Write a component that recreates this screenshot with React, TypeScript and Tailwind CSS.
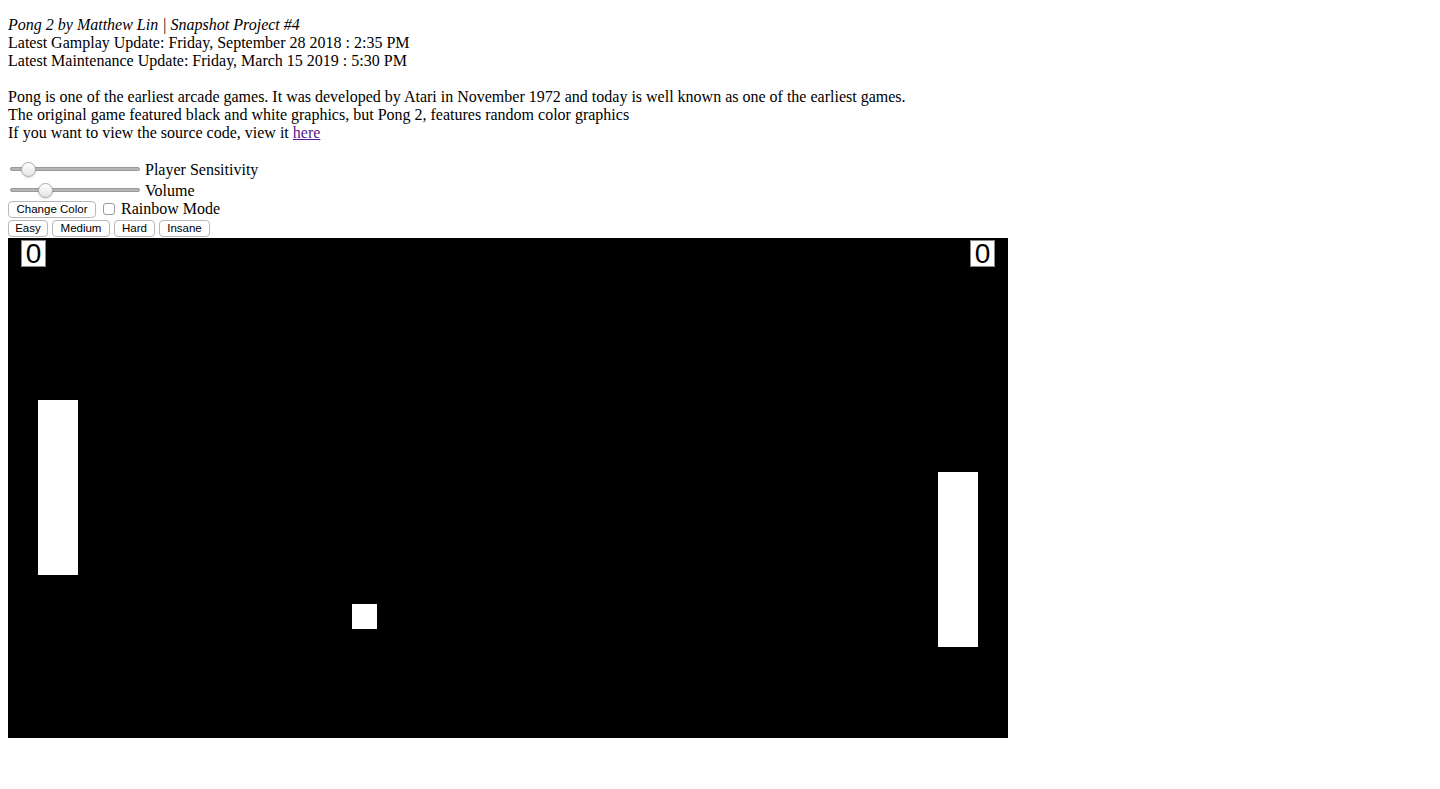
const serif = { fontFamily: '"Liberation Serif", "Times New Roman", serif' };

function Slider({ thumb }: { thumb: number }) {
  return (
    <div className="relative h-[20px] w-[136px] shrink-0">
      <div className="absolute left-[2px] right-[4px] top-[8px] h-[4px] rounded-full bg-[#b5b5b5] border border-[#9a9a9a]" />
      <div
        className="absolute top-[3px] h-[15px] w-[15px] rounded-full bg-gradient-to-b from-white to-[#e4e4e4] border border-[#a8a8a8] shadow-sm"
        style={{ left: thumb }}
      />
    </div>
  );
}

function Btn({ label, w }: { label: string; w: string }) {
  return (
    <button
      className={`${w} h-[17px] rounded-[4px] border border-[#b8b8b8] bg-white text-[11.5px] leading-[15px] text-black`}
      style={{ fontFamily: '"Liberation Sans", Arial, sans-serif' }}
    >
      {label}
    </button>
  );
}

function Score({ className }: { className: string }) {
  return (
    <div
      className={`absolute top-[2px] h-[27px] w-[25px] border border-[#888] bg-white text-center text-[28px] leading-[25px] text-black ${className}`}
      style={{ fontFamily: '"Liberation Sans", Arial, sans-serif' }}
    >
      0
    </div>
  );
}

export default function App() {
  return (
    <div className="min-h-[789px] bg-white px-[8px] pt-[16px] text-[16px] leading-[18px] text-black" style={serif}>
      <div>
        <div className="italic">Pong 2 by Matthew Lin | Snapshot Project #4</div>
        <div>Latest Gamplay Update: Friday, September 28 2018 : 2:35 PM</div>
        <div>Latest Maintenance Update: Friday, March 15 2019 : 5:30 PM</div>
        <div className="h-[18px]" />
        <div>Pong is one of the earliest arcade games. It was developed by Atari in November 1972 and today is well known as one of the earliest games.</div>
        <div>The original game featured black and white graphics, but Pong 2, features random color graphics</div>
        <div>
          If you want to view the source code, view it{" "}
          <a href="#" className="text-[#551a8b] underline">here</a>
        </div>
      </div>

      <div className="mt-[16px] flex flex-col">
        <div className="flex h-[21px] items-end">
          <Slider thumb={13} />
          <span className="ml-[1px] leading-[18px]">Player Sensitivity</span>
        </div>
        <div className="flex h-[21px] items-end">
          <Slider thumb={30} />
          <span className="ml-[1px] leading-[18px]">Volume</span>
        </div>
        <div className="flex h-[18px] items-center">
          <Btn label="Change Color" w="w-[88px]" />
          <span className="ml-[7px] h-[12px] w-[12px] rounded-[3px] border border-[#9a9a9a] bg-white" />
          <span className="ml-[6px] leading-[18px]">Rainbow Mode</span>
        </div>
        <div className="mt-[2px] flex h-[17px] items-center gap-[4px]">
          <Btn label="Easy" w="w-[40px]" />
          <Btn label="Medium" w="w-[58px]" />
          <Btn label="Hard" w="w-[41px]" />
          <Btn label="Insane" w="w-[51px]" />
        </div>
      </div>

      <div className="relative mt-[1px] h-[500px] w-[1000px] bg-black">
        <Score className="left-[13px]" />
        <Score className="left-[962px]" />
        <div className="absolute left-[30px] top-[162px] h-[175px] w-[40px] bg-white" />
        <div className="absolute left-[930px] top-[234px] h-[175px] w-[40px] bg-white" />
        <div className="absolute left-[344px] top-[366px] h-[25px] w-[25px] bg-white" />
      </div>
    </div>
  );
}
